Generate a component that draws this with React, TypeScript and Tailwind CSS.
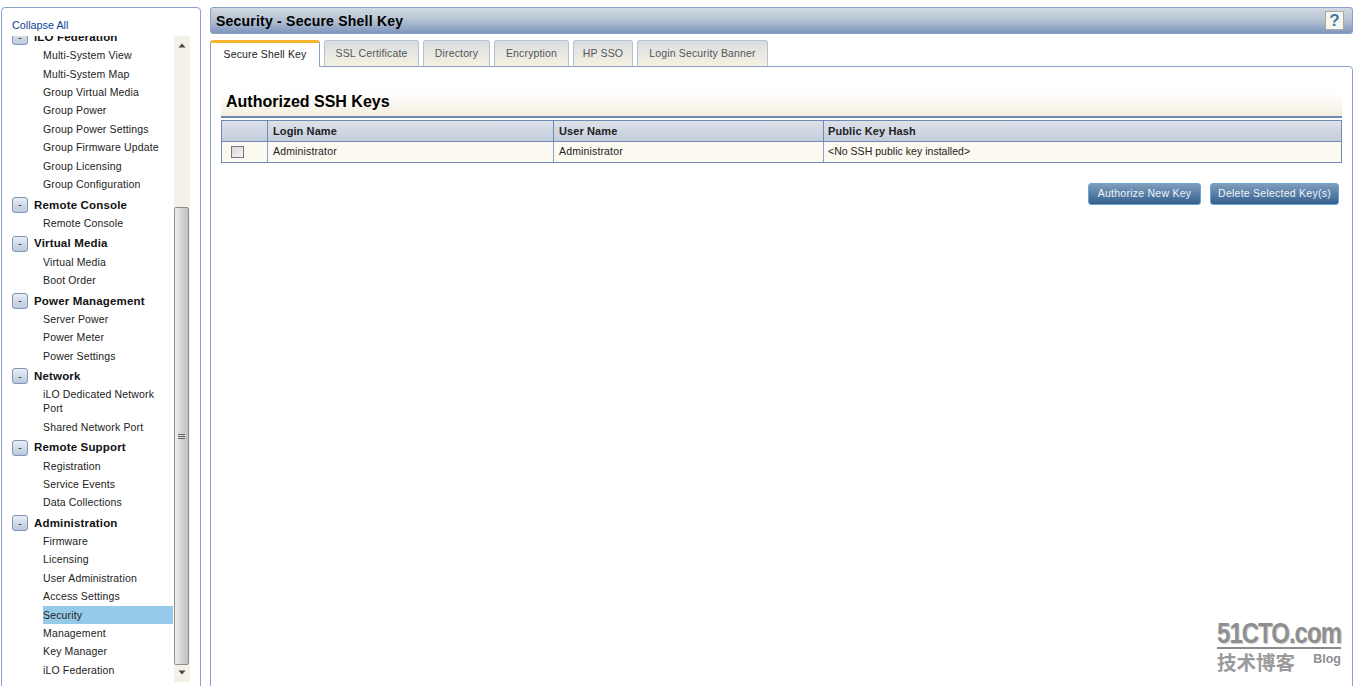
import React from "react";

const FONT = "font-['Liberation_Sans',Arial,sans-serif]";

type NavGroup = { title: string; items: string[] };

const groups: NavGroup[] = [
  {
    title: "iLO Federation",
    items: [
      "Multi-System View",
      "Multi-System Map",
      "Group Virtual Media",
      "Group Power",
      "Group Power Settings",
      "Group Firmware Update",
      "Group Licensing",
      "Group Configuration",
    ],
  },
  { title: "Remote Console", items: ["Remote Console"] },
  { title: "Virtual Media", items: ["Virtual Media", "Boot Order"] },
  { title: "Power Management", items: ["Server Power", "Power Meter", "Power Settings"] },
  { title: "Network", items: ["iLO Dedicated Network Port", "Shared Network Port"] },
  { title: "Remote Support", items: ["Registration", "Service Events", "Data Collections"] },
  {
    title: "Administration",
    items: [
      "Firmware",
      "Licensing",
      "User Administration",
      "Access Settings",
      "Security",
      "Management",
      "Key Manager",
      "iLO Federation",
    ],
  },
];

const tabs = [
  { label: "SSL Certificate", w: "w-[95px]" },
  { label: "Directory", w: "w-[67px]" },
  { label: "Encryption", w: "w-[75px]" },
  { label: "HP SSO", w: "w-[60px]" },
  { label: "Login Security Banner", w: "w-[131px]" },
];

const Scrollbar = () => (
  <div className="flex h-[646px] w-[16px] shrink-0 flex-col bg-[#f4f1e6]">
    <div className="flex h-[171px] justify-center pt-[7px]">
      <svg width="8" height="5" viewBox="0 0 8 5">
        <path d="M4 0.5 L7.5 4.5 H0.5 Z" fill="#4a4a4a" />
      </svg>
    </div>
    <div className="flex h-[458px] w-[15px] flex-col items-center justify-center rounded-[2px] border border-[#8d8d8d] bg-gradient-to-r from-[#f0efe9] via-[#d4d4d2] to-[#bfc1c3]">
      <div className="flex w-[7px] flex-col gap-px">
        <div className="h-px bg-[#666]" />
        <div className="h-px bg-[#666]" />
        <div className="h-px bg-[#666]" />
      </div>
    </div>
    <div className="flex flex-1 justify-center pt-[5px]">
      <svg width="8" height="5" viewBox="0 0 8 5">
        <path d="M0.5 0.5 H7.5 L4 4.5 Z" fill="#4a4a4a" />
      </svg>
    </div>
  </div>
);

const Sidebar = () => (
  <aside className="h-[700px] w-[200px] shrink-0 rounded-t-[4px] border border-[#8ba1c9] bg-white">
    <div className="h-[28px] pl-[10px] pt-[10px] text-[10.8px] leading-[14px] text-[#0b3f97]">Collapse All</div>
    <div className="flex">
      <div className="h-[646px] w-[172px] shrink-0 overflow-hidden">
        <div className="-mt-[7.7px]">
          {groups.map((g, i) => (
            <div key={g.title} className={i > 0 ? "mt-[2.4px]" : ""}>
              <div className="flex h-[18px] items-center">
                <div className="ml-[10px] flex h-[16px] w-[16px] items-center justify-center rounded-[3px] border border-[#7f96b8] bg-gradient-to-b from-[#e8edf3] to-[#bccadb] text-[11px] leading-none text-[#333]">
                  -
                </div>
                <span className="ml-[6px] pt-px text-[11.5px] font-bold tracking-[0.17px] text-[#111]">{g.title}</span>
              </div>
              {g.items.map((item) => (
                <div
                  key={item}
                  className={`ml-[41px] w-[130px] pr-[14px] text-[10.5px] tracking-[0.15px] text-[#222] ${
                    item === "iLO Dedicated Network Port"
                      ? "h-[32.4px] pt-[2px] leading-[14px]"
                      : "h-[18.4px] leading-[18.4px]"
                  } ${item === "Security" ? "bg-[#95cbe8]" : ""}`}
                >
                  {item}
                </div>
              ))}
            </div>
          ))}
        </div>
      </div>
      <Scrollbar />
    </div>
  </aside>
);

const TitleBar = () => (
  <div className="flex h-[27px] items-center justify-between rounded-[3px] border border-[#8aa0c4] bg-gradient-to-b from-[#d2dae4] via-[#b4c1d1] to-[#7e96bd] pl-[5px] pr-[8px]">
    <h1 className="pt-px text-[14px] font-bold tracking-[0.22px] text-black">Security - Secure Shell Key</h1>
    <div className="flex h-[19px] w-[19px] items-center justify-center border border-[#a9a99f] bg-[#f6f5ee] text-[17px] font-bold leading-none text-[#3d78ad]">
      ?
    </div>
  </div>
);

const Tabs = () => (
  <div className="mt-[6px] flex h-[26px] gap-[4px]">
    <div className="relative z-10 -mb-px flex h-[27px] w-[110px] items-center justify-center rounded-t-[3px] border-x border-t-[3px] border-x-[#8ba1c9] border-t-[#f5b42c] bg-white text-[10.5px] tracking-[0.15px] text-[#222]">
      Secure Shell Key
    </div>
    {tabs.map((t) => (
      <div
        key={t.label}
        className={`flex h-[26px] items-center justify-center rounded-t-[3px] border border-b-0 border-[#b4c0d4] bg-gradient-to-b from-[#d9dde2] via-[#e8e8e2] to-[#f5f1e0] pt-px text-[10.5px] tracking-[0.15px] text-[#555] ${t.w}`}
      >
        {t.label}
      </div>
    ))}
  </div>
);

const KeysTable = () => (
  <div className="mx-[10px] border border-[#7089b5]">
    <div className="flex h-[21px] border-b border-[#7089b5] bg-gradient-to-b from-[#dde2e9] to-[#c3cddb] text-[11px] font-bold tracking-[0.1px] text-[#222]">
      <div className="w-[46px] border-r border-[#7089b5]" />
      <div className="flex w-[286px] items-center border-r border-[#7089b5] pl-[5px]">Login Name</div>
      <div className="flex w-[270px] items-center border-r border-[#7089b5] pl-[5px]">User Name</div>
      <div className="flex flex-1 items-center pl-[4px]">Public Key Hash</div>
    </div>
    <div className="flex h-[20px] bg-[#fbf9f0] text-[10.5px] text-[#222]">
      <div className="flex w-[46px] items-center border-r border-[#8ba1c9] pl-[9px]">
        <div className="h-[12px] w-[13px] border border-[#777] bg-gradient-to-br from-[#d8d8d8] to-[#f5f5f5]" />
      </div>
      <div className="flex w-[286px] items-center border-r border-[#8ba1c9] pl-[5px] tracking-[0.15px]">Administrator</div>
      <div className="flex w-[270px] items-center border-r border-[#8ba1c9] pl-[5px] tracking-[0.15px]">Administrator</div>
      <div className="flex flex-1 items-center pl-[4px] tracking-[0.03px]">&lt;No SSH public key installed&gt;</div>
    </div>
  </div>
);

const ActionButton = ({ label, w }: { label: string; w: string }) => (
  <div
    className={`flex h-[22px] items-center justify-center rounded-[3px] border border-[#6fa3cf] bg-gradient-to-b from-[#7f9dbd] to-[#33608f] text-[10.5px] tracking-[0.25px] text-[#eef3f8] ${w}`}
  >
    {label}
  </div>
);

const Watermark = () => (
  <div className="absolute left-[1217px] top-[619px] w-[124px] select-none text-[#8f8f8f]">
    <div className="h-[30px] border-b-[2px] border-[#8a8a8a]">
      <div className="origin-top scale-y-[1.2] whitespace-nowrap text-center text-[24px] font-bold leading-[24px] tracking-[-1px] [text-shadow:1px_1px_0_#d0d0d0]">
        51CTO.com
      </div>
    </div>
    <div className="mt-[1px] flex items-start justify-between">
      <span className="font-['Noto_Sans_CJK_SC',sans-serif] text-[19.5px] font-bold leading-[24px] text-[#9a9a9a]">技术博客</span>
      <span className="pt-[3px] text-[12.5px] font-bold leading-[12px] text-[#8f8f8f]">Blog</span>
    </div>
  </div>
);

export default function App() {
  return (
    <div className={`${FONT} relative flex h-[686px] w-[1355px] gap-[9px] overflow-hidden bg-white pl-px pt-[7px]`}>
      <Sidebar />
      <main className="w-[1143px] shrink-0">
        <TitleBar />
        <Tabs />
        <section className="h-[640px] rounded-tr-[4px] border border-[#8ba1c9] bg-white pt-[25px]">
          <div className="mx-[10px] h-[24px] bg-gradient-to-b from-white to-[#f4efdf] pl-[5px] text-[16px] font-bold leading-[19px] text-black">
            Authorized SSH Keys
          </div>
          <div className="mx-[10px] h-[2px] bg-[#6f87b3]" />
          <div className="h-[2px]" />
          <KeysTable />
          <div className="mr-[13px] mt-[20px] flex justify-end gap-[9px]">
            <ActionButton label="Authorize New Key" w="w-[113px]" />
            <ActionButton label="Delete Selected Key(s)" w="w-[129px]" />
          </div>
        </section>
      </main>
      <Watermark />
    </div>
  );
}
